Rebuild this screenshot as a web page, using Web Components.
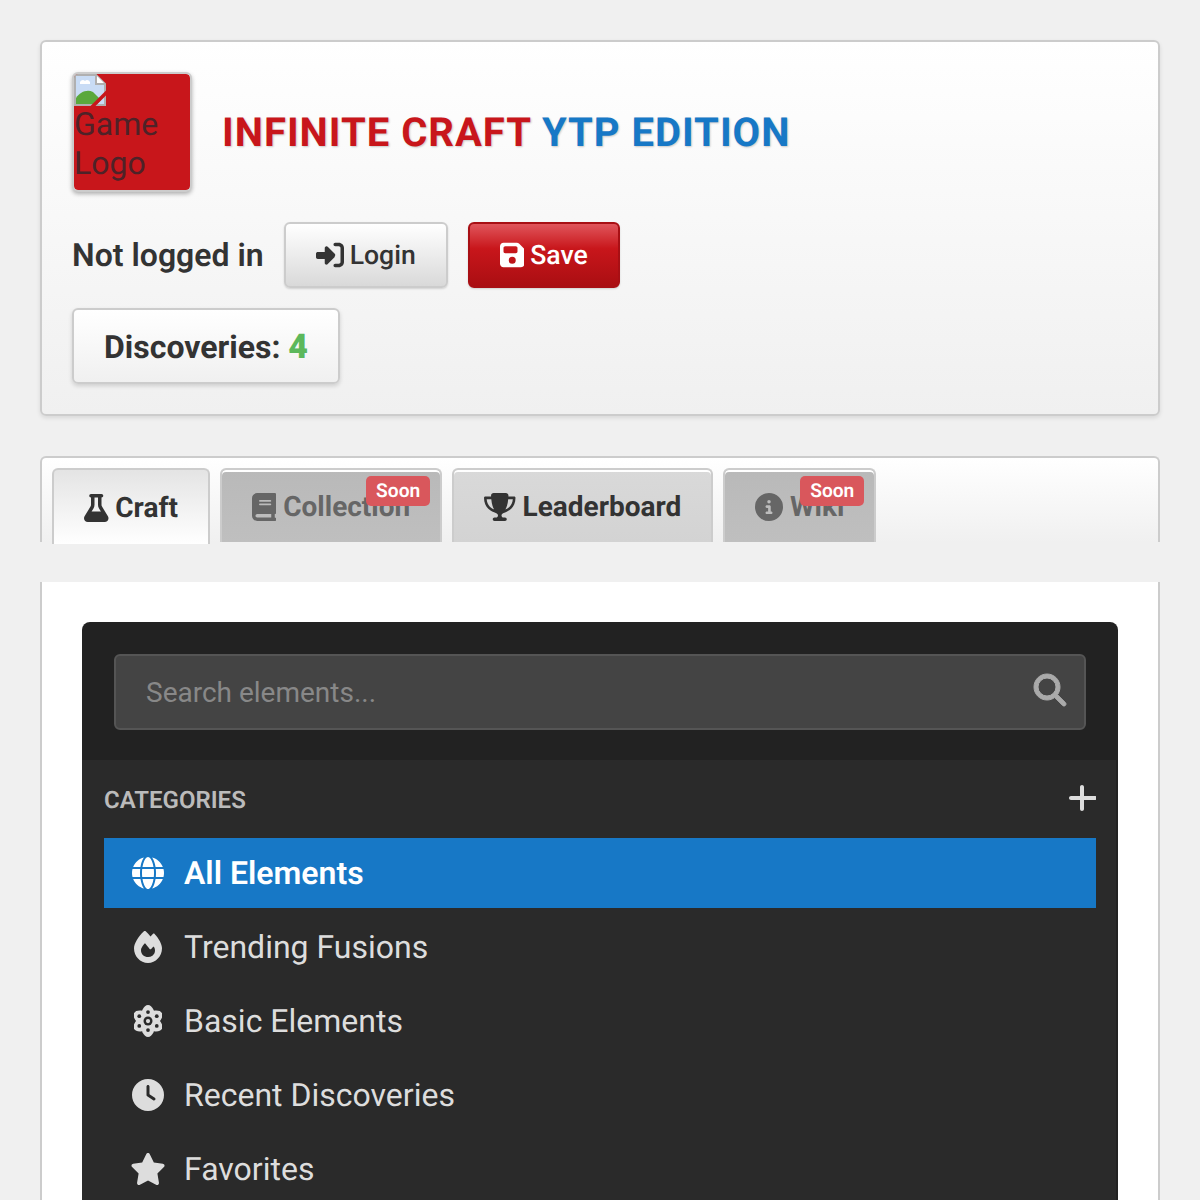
<!DOCTYPE html>
<html lang="en">
<head>
<meta charset="utf-8">
<title>Infinite Craft YTP Edition</title>
<style>
  html { overflow: hidden; }
  body {
    margin: 0;
    padding: 40px;
    height: 1120px;
    overflow: hidden;
    background: #f0f0f0;
    color: #333;
    font-family: Roboto, "Liberation Sans", sans-serif;
    text-rendering: geometricPrecision;
  }
</style>
</head>
<body>
<game-header>
  <broken-logo slot="logo" alt="Game Logo"></broken-logo>
  <span slot="red">INFINITE CRAFT</span>
  <span slot="blue">YTP EDITION</span>
  <span slot="status">Not logged in</span>
  <game-button slot="login" icon="login">Login</game-button>
  <game-button slot="save" icon="save" variant="red">Save</game-button>
  <discovery-count slot="count" count="4"></discovery-count>
</game-header>

<tab-bar>
  <tab-button icon="flask" active>Craft</tab-button>
  <tab-button icon="book" disabled badge="Soon">Collection</tab-button>
  <tab-button icon="trophy">Leaderboard</tab-button>
  <tab-button icon="info" disabled badge="Soon">Wiki</tab-button>
</tab-bar>

<content-card>
  <element-panel>
    <search-box placeholder="Search elements..."></search-box>
    <category-list>
      <category-item icon="globe" active>All Elements</category-item>
      <category-item icon="fire">Trending Fusions</category-item>
      <category-item icon="atom">Basic Elements</category-item>
      <category-item icon="clock">Recent Discoveries</category-item>
      <category-item icon="star">Favorites</category-item>
    </category-list>
  </element-panel>
</content-card>

<script>
const ICONS = {
  login: ["0 0 512 512", `<path d="M352 96l64 0c17.7 0 32 14.3 32 32l0 256c0 17.7-14.3 32-32 32l-64 0c-17.7 0-32 14.3-32 32s14.3 32 32 32l64 0c53 0 96-43 96-96l0-256c0-53-43-96-96-96l-64 0c-17.7 0-32 14.3-32 32s14.3 32 32 32zm-9.4 182.6c12.5-12.5 12.5-32.8 0-45.3l-128-128c-9.2-9.2-22.9-11.9-34.9-6.9s-19.8 16.6-19.8 29.6l0 72-128 0c-17.7 0-32 14.3-32 32l0 64c0 17.7 14.3 32 32 32l128 0 0 72c0 12.9 7.8 24.6 19.8 29.6s25.7 2.2 34.9-6.9l128-128z"/>`],
  save: ["0 0 448 512", `<path d="M64 32C28.7 32 0 60.7 0 96V416c0 35.3 28.7 64 64 64H384c35.3 0 64-28.7 64-64V173.3c0-17-6.7-33.3-18.7-45.3L352 50.7C340 38.7 323.7 32 306.7 32H64zm0 96c0-17.7 14.3-32 32-32H288c17.7 0 32 14.3 32 32v64c0 17.7-14.3 32-32 32H96c-17.7 0-32-14.3-32-32V128zM224 288a64 64 0 1 1 0 128 64 64 0 1 1 0-128z"/>`],
  flask: ["0 0 448 512", `<path d="M288 0H160 128C110.3 0 96 14.3 96 32s14.3 32 32 32V196.8c0 11.8-3.3 23.5-9.5 33.5L10.3 406.2C3.6 417.2 0 429.7 0 442.6C0 480.9 31.1 512 69.4 512H378.6c38.3 0 69.4-31.1 69.4-69.4c0-12.8-3.6-25.4-10.3-36.4L329.5 230.4c-6.2-10.1-9.5-21.7-9.5-33.5V64c17.7 0 32-14.3 32-32s-14.3-32-32-32H288zM192 196.8V64h64V196.8c0 23.7 6.6 46.9 19 67.1L309.5 320h-171L173 263.9c12.4-20.2 19-43.4 19-67.1z"/>`],
  book: ["0 0 448 512", `<path d="M96 0C43 0 0 43 0 96V416c0 53 43 96 96 96H384h32c17.7 0 32-14.3 32-32s-14.3-32-32-32V384c17.7 0 32-14.3 32-32V32c0-17.7-14.3-32-32-32H384 96zm0 384H352v64H96c-17.7 0-32-14.3-32-32s14.3-32 32-32zm32-240c0-8.8 7.2-16 16-16H336c8.8 0 16 7.2 16 16s-7.2 16-16 16H144c-8.8 0-16-7.2-16-16zm16 48H336c8.8 0 16 7.2 16 16s-7.2 16-16 16H144c-8.8 0-16-7.2-16-16s7.2-16 16-16z"/>`],
  trophy: ["0 0 576 512", `<path d="M400 0H176c-26.5 0-48.1 21.8-47.1 48.2c.2 5.3 .4 10.6 .7 15.8H24C10.7 64 0 74.7 0 88c0 92.6 33.5 157 78.5 200.7c44.3 43.1 98.3 64.8 138.1 75.8c23.4 6.5 39.4 26 39.4 45.6c0 20.9-17 37.9-37.9 37.9H192c-17.7 0-32 14.3-32 32s14.3 32 32 32H384c17.7 0 32-14.3 32-32s-14.3-32-32-32H357.9C337 448 320 431 320 410.1c0-19.6 15.9-39.2 39.4-45.6c39.9-11 93.9-32.7 138.2-75.8C542.5 245 576 180.6 576 88c0-13.3-10.7-24-24-24H446.4c.3-5.2 .5-10.4 .7-15.8C448.1 21.8 426.5 0 400 0zM48.9 112h84.4c9.1 90.1 29.2 150.3 51.9 190.6c-24.9-11-50.8-26.5-73.2-48.3c-32-31.1-58-76-63-142.3zM464.1 254.3c-22.4 21.8-48.3 37.3-73.2 48.3c22.7-40.3 42.8-100.5 51.9-190.6h84.4c-5.1 66.3-31.1 111.2-63 142.3z"/>`],
  info: ["0 0 512 512", `<path d="M256 512A256 256 0 1 0 256 0a256 256 0 1 0 0 512zM216 336h24V272H216c-13.3 0-24-10.7-24-24s10.7-24 24-24h48c13.3 0 24 10.7 24 24v88h8c13.3 0 24 10.7 24 24s-10.7 24-24 24H216c-13.3 0-24-10.7-24-24s10.7-24 24-24zm40-208a32 32 0 1 1 0 64 32 32 0 1 1 0-64z"/>`],
  globe: ["0 0 512 512", `<path d="M352 256c0 22.2-1.2 43.6-3.3 64H163.3c-2.2-20.4-3.3-41.8-3.3-64s1.2-43.6 3.3-64H348.7c2.2 20.4 3.3 41.8 3.3 64zm28.8-64H503.9c5.3 20.5 8.1 41.9 8.1 64s-2.8 43.5-8.1 64H380.8c2.1-20.6 3.2-42 3.2-64s-1.1-43.4-3.2-64zm112.6-32H376.7c-10-63.9-29.8-117.4-55.3-151.6c78.3 20.7 142 77.5 171.9 151.6zm-149.1 0H167.7c6.1-36.4 15.5-68.6 27-94.7c10.5-23.6 22.2-40.7 33.5-51.5C239.4 3.2 248.7 0 256 0s16.6 3.2 27.8 13.8c11.3 10.8 23 27.9 33.5 51.5c11.6 26 20.9 58.2 27 94.7zm-209 0H18.6C48.6 85.9 112.2 29.1 190.6 8.4C165.1 42.6 145.3 96.1 135.3 160zM8.1 192H131.2c-2.1 20.6-3.2 42-3.2 64s1.1 43.4 3.2 64H8.1C2.8 299.5 0 278.1 0 256s2.8-43.5 8.1-64zM194.7 446.6c-11.6-26-20.9-58.2-27-94.6H344.3c-6.1 36.4-15.5 68.6-27 94.6c-10.5 23.6-22.2 40.7-33.5 51.5C272.6 508.8 263.3 512 256 512s-16.6-3.2-27.8-13.8c-11.3-10.8-23-27.9-33.5-51.5zM135.3 352c10 63.9 29.8 117.4 55.3 151.6C112.2 482.9 48.6 426.1 18.6 352H135.3zm358.1 0c-30 74.1-93.6 130.9-171.9 151.6c25.5-34.2 45.2-87.7 55.3-151.6H493.4z"/>`],
  fire: ["0 0 448 512", `<path d="M159.3 5.4c7.8-7.3 19.9-7.2 27.7 .1c27.6 25.9 53.5 53.8 77.7 84c11-14.4 23.5-30.1 37-42.9c7.9-7.4 20.1-7.4 28 .1c34.6 33 63.9 76.6 84.5 118c20.3 40.8 33.8 82.5 33.8 111.9C448 404.2 348.2 512 224 512C98.4 512 0 404.1 0 276.5c0-38.4 17.8-85.3 45.4-131.7C73.3 97.7 112.7 48.6 159.3 5.4zM225.7 416c25.3 0 47.7-7 68.8-21c42.1-29.4 53.4-88.2 28.1-134.4c-4.5-9-16-9.6-22.5-2l-25.2 29.3c-6.6 7.6-18.5 7.4-24.7-.5c-16.5-21-46-58.5-62.8-79.8c-6.3-8-18.3-8.1-24.7-.1c-33.8 42.5-50.8 69.3-50.8 99.4C112 375.4 162.6 416 225.7 416z"/>`],
  atom: ["0 0 448 512", `<mask id="atom-holes"><rect width="448" height="512" fill="#000"/><g fill="#fff"><ellipse cx="224" cy="256" rx="125" ry="256"/><ellipse cx="224" cy="256" rx="125" ry="256" transform="rotate(60 224 256)"/><ellipse cx="224" cy="256" rx="125" ry="256" transform="rotate(-60 224 256)"/></g><g fill="#000"><circle cx="224" cy="112" r="30"/><circle cx="224" cy="400" r="30"/><circle cx="84" cy="178" r="30"/><circle cx="364" cy="178" r="30"/><circle cx="84" cy="334" r="30"/><circle cx="364" cy="334" r="30"/><circle cx="224" cy="256" r="72"/></g><circle cx="224" cy="256" r="34" fill="#fff"/></mask><rect width="448" height="512" mask="url(#atom-holes)"/>`],
  clock: ["0 0 512 512", `<path d="M256 0a256 256 0 1 1 0 512A256 256 0 1 1 256 0zM232 120V256c0 8 4 15.5 10.7 20l96 64c11 7.4 25.9 4.4 33.3-6.7s4.4-25.9-6.7-33.3L280 243.2V120c0-13.3-10.7-24-24-24s-24 10.7-24 24z"/>`],
  star: ["0 0 576 512", `<path d="M316.9 18C311.6 7 300.4 0 288.1 0s-23.4 7-28.8 18L195 150.3 51.4 171.5c-12 1.8-22 10.2-25.7 21.7s-.7 24.2 7.9 32.7L137.8 329 113.2 474.7c-2 12 3 24.2 12.9 31.3s23 8 33.8 2.3l128.3-68.5 128.3 68.5c10.8 5.7 23.9 4.9 33.8-2.3s14.9-19.3 12.9-31.3L438.5 329 542.7 225.9c8.6-8.5 11.7-21.2 7.9-32.7s-13.7-19.9-25.7-21.7L381.2 150.3 316.9 18z"/>`],
  search: ["0 0 512 512", `<path d="M416 208c0 45.9-14.9 88.3-40 122.7L502.6 457.4c12.5 12.5 12.5 32.8 0 45.3s-32.8 12.5-45.3 0L330.7 376c-34.4 25.2-76.8 40-122.7 40C93.1 416 0 322.9 0 208S93.1 0 208 0S416 93.1 416 208zM208 352a144 144 0 1 0 0-288 144 144 0 1 0 0 288z"/>`],
  plus: ["0 0 448 512", `<path d="M256 80c0-17.7-14.3-32-32-32s-32 14.3-32 32V224H48c-17.7 0-32 14.3-32 32s14.3 32 32 32H192V432c0 17.7 14.3 32 32 32s32-14.3 32-32V288H432c17.7 0 32-14.3 32-32s-14.3-32-32-32H256V80z"/>`],
};

function iconSvg(name, size) {
  const [box, body] = ICONS[name];
  return `<svg viewBox="${box}" height="${size}" fill="currentColor" aria-hidden="true">${body}</svg>`;
}

class GameHeader extends HTMLElement {
  constructor() {
    super();
    this.attachShadow({ mode: "open" });
    this.shadowRoot.innerHTML = `
    <style>
      :host {
        display: flex;
        flex-direction: column;
        gap: 20px;
        box-sizing: border-box;
        height: 376px;
        padding: 30px;
        margin-bottom: 40px;
        background: linear-gradient(#fff, #f0f0f0);
        border: 2px solid #ccc;
        border-radius: 6px;
        box-shadow: 0 2px 4px rgba(0, 0, 0, 0.1);
      }
      .top { display: flex; align-items: center; gap: 30px; margin-bottom: 10px; }
      h1 {
        margin: 0;
        padding-top: 2px;
        font-size: 40px;
        font-weight: 700;
        line-height: 48px;
        color: #c8161b;
        letter-spacing: 1px;
        text-shadow: 1px 1px 2px rgba(0, 0, 0, 0.2);
      }
      .blue { color: #1778c6; }
      .user { display: flex; align-items: center; gap: 20px; }
      .status { font-size: 32px; font-weight: 600; }
    </style>
    <div class="top">
      <slot name="logo"></slot>
      <h1><slot name="red"></slot> <span class="blue"><slot name="blue"></slot></span></h1>
    </div>
    <div class="user">
      <span class="status"><slot name="status"></slot></span>
      <slot name="login"></slot>
      <slot name="save"></slot>
    </div>
    <div><slot name="count"></slot></div>
    `;
  }
}

class BrokenLogo extends HTMLElement {
  constructor() {
    super();
    this.attachShadow({ mode: "open" });
  }

  connectedCallback() {
    const alt = this.getAttribute("alt") || "";
    this.shadowRoot.innerHTML = `
    <style>
      :host {
        display: block;
        box-sizing: border-box;
        width: 120px;
        height: 120px;
        background: #c8161b;
        background-clip: padding-box;
        border: 2px solid #ccc;
        border-radius: 6px;
        box-shadow: 0 2px 4px rgba(0, 0, 0, 0.3);
        color: #4e2228;
        font-size: 32px;
        line-height: 39px;
        overflow: hidden;
      }
      svg { display: block; margin-bottom: -1px; }
    </style>
    <svg width="32" height="32" viewBox="0 0 32 32" aria-hidden="true">
      <path d="M1 1H22L31 10V31H1Z" fill="#c9dcf5" stroke="#b0b0b0" stroke-width="2"/>
      <path d="M22 1V10H31" fill="#fff" stroke="#b0b0b0" stroke-width="2"/>
      <path d="M6 10a3 3 0 0 1 5-3a3 3 0 0 1 5 3Z" fill="#fff"/>
      <path d="M2 30V24C6 18 13 15 19 18L27 26L23 30Z" fill="#5aa83c"/>
      <path d="M16 35L35 16" stroke="#c8161b" stroke-width="3.5"/>
    </svg>
    <div>${alt}</div>
    `;
  }
}

class GameButton extends HTMLElement {
  constructor() {
    super();
    this.attachShadow({ mode: "open" });
  }

  connectedCallback() {
    const red = this.getAttribute("variant") === "red";
    this.shadowRoot.innerHTML = `
    <style>
      :host {
        display: flex;
        align-items: center;
        gap: 6px;
        box-sizing: border-box;
        height: 66px;
        padding: 0 30px;
        border-radius: 6px;
        font-size: 26.6px;
        font-weight: 500;
        border: 2px solid ${red ? "#a80f14" : "#ccc"};
        color: ${red ? "#fff" : "#333"};
        background: ${red
          ? "linear-gradient(#e0555b 0%, #c8161b 40%, #aa0e12 100%)"
          : "linear-gradient(#fff, #d9d9d9)"};
        box-shadow: 0 1px 2px rgba(0, 0, 0, 0.15);
      }
    </style>
    ${iconSvg(this.getAttribute("icon"), 28)}
    <slot></slot>
    `;
  }
}

class DiscoveryCount extends HTMLElement {
  constructor() {
    super();
    this.attachShadow({ mode: "open" });
  }

  connectedCallback() {
    this.shadowRoot.innerHTML = `
    <style>
      :host {
        display: inline-block;
        box-sizing: border-box;
        height: 76px;
        padding: 0 30px;
        line-height: 74px;
        font-size: 32px;
        font-weight: 700;
        border: 2px solid #ccc;
        border-radius: 6px;
        background: linear-gradient(#fff, #f0f0f0);
        box-shadow: 0 2px 4px rgba(0, 0, 0, 0.15);
      }
      b { color: #5cb85c; font-size: 34px; }
    </style>
    Discoveries: <b>${this.getAttribute("count")}</b>
    `;
  }
}

class TabBar extends HTMLElement {
  constructor() {
    super();
    this.attachShadow({ mode: "open" });
    this.shadowRoot.innerHTML = `
    <style>
      :host {
        display: flex;
        gap: 10px;
        box-sizing: border-box;
        height: 86px;
        padding: 10px 10px 0;
        margin-bottom: 40px;
        background: linear-gradient(#fff, #f0f0f0);
        border: 2px solid #ccc;
        border-bottom: 0;
        border-radius: 6px 6px 0 0;
      }
    </style>
    <slot></slot>
    `;
  }
}

class TabButton extends HTMLElement {
  constructor() {
    super();
    this.attachShadow({ mode: "open" });
  }

  connectedCallback() {
    const active = this.hasAttribute("active");
    const disabled = this.hasAttribute("disabled");
    const badge = this.getAttribute("badge");
    let bg = "linear-gradient(#d9d9d9, #d3d3d3)";
    if (active) bg = "linear-gradient(#e4e4e4, #fff)";
    if (disabled) bg = "linear-gradient(#b9b9b9, #bfbfbf)";
    this.shadowRoot.innerHTML = `
    <style>
      :host {
        position: relative;
        display: flex;
        align-items: center;
        gap: 6.8px;
        box-sizing: border-box;
        height: ${active ? 76 : 74}px;
        padding: 1px 30px 0;
        font-size: 28px;
        font-weight: 700;
        color: ${disabled ? "#666" : "#333"};
        background: ${bg};
        border: 2px solid #ccc;
        border-bottom: 0;
        border-radius: 6px 6px 0 0;
        ${active ? "" : "box-shadow: inset 0 2px 0 #fff;"}
      }
      svg { flex: none; }
      .badge {
        position: absolute;
        top: 6px;
        right: 10px;
        padding: 0 10px;
        height: 30px;
        line-height: 30px;
        border-radius: 5px;
        background: #d9575c;
        color: #fff;
        font-size: 19.2px;
        font-weight: 600;
      }
    </style>
    ${iconSvg(this.getAttribute("icon"), 28)}
    <slot></slot>
    ${badge ? `<span class="badge">${badge}</span>` : ""}
    `;
  }
}

class ContentCard extends HTMLElement {
  constructor() {
    super();
    this.attachShadow({ mode: "open" });
    this.shadowRoot.innerHTML = `
    <style>
      :host {
        display: block;
        box-sizing: border-box;
        padding: 40px;
        min-height: 700px;
        background: #fff;
        border: 2px solid #ccc;
        border-top: 0;
        border-bottom: 0;
      }
    </style>
    <slot></slot>
    `;
  }
}

class ElementPanel extends HTMLElement {
  constructor() {
    super();
    this.attachShadow({ mode: "open" });
    this.shadowRoot.innerHTML = `
    <style>
      :host {
        display: block;
        background: #222;
        border-radius: 8px 8px 0 0;
        overflow: hidden;
      }
    </style>
    <slot></slot>
    `;
  }
}

class SearchBox extends HTMLElement {
  constructor() {
    super();
    this.attachShadow({ mode: "open" });
  }

  connectedCallback() {
    this.shadowRoot.innerHTML = `
    <style>
      :host {
        display: block;
        position: relative;
        padding: 32px 32px 30px;
      }
      input {
        display: block;
        box-sizing: border-box;
        width: 100%;
        height: 76px;
        padding: 0 30px;
        font: 400 28px Roboto, "Liberation Sans", sans-serif;
        color: #eee;
        background: #444;
        border: 2px solid #555;
        border-radius: 6px;
        outline: 0;
      }
      input::placeholder { color: #888; opacity: 1; }
      svg {
        position: absolute;
        top: 52px;
        right: 52px;
        color: #aaa;
        overflow: visible;
        stroke: currentColor;
        stroke-width: 16;
      }
    </style>
    <input type="text" placeholder="${this.getAttribute("placeholder")}">
    ${iconSvg("search", 32)}
    `;
  }
}

class CategoryList extends HTMLElement {
  constructor() {
    super();
    this.attachShadow({ mode: "open" });
    this.shadowRoot.innerHTML = `
    <style>
      :host {
        display: block;
        box-sizing: border-box;
        margin-right: 2px;
        padding: 20px 20px 0 22px;
        background: #2a2a2a;
        height: 500px;
      }
      .head {
        display: flex;
        align-items: center;
        justify-content: space-between;
        height: 38px;
        margin-bottom: 20px;
        color: #bbb;
        font-size: 24px;
        font-weight: 600;
        text-transform: uppercase;
      }
      .head span { padding-top: 2px; }
      .head svg { display: block; color: #ddd; margin: -2px 0 0 0; }
      .list { display: flex; flex-direction: column; gap: 4px; }
    </style>
    <div class="head">
      <span>Categories</span>
      ${iconSvg("plus", 32)}
    </div>
    <div class="list"><slot></slot></div>
    `;
  }
}

class CategoryItem extends HTMLElement {
  constructor() {
    super();
    this.attachShadow({ mode: "open" });
  }

  connectedCallback() {
    const active = this.hasAttribute("active");
    this.shadowRoot.innerHTML = `
    <style>
      :host {
        display: flex;
        align-items: center;
        gap: 20px;
        box-sizing: border-box;
        height: 70px;
        padding: 0 28px;
        font-size: 32px;
        font-weight: ${active ? 600 : 400};
        color: ${active ? "#fff" : "#ddd"};
        background: ${active ? "#1778c6" : "transparent"};
      }
      .icon { flex: none; width: 32px; display: flex; justify-content: center; }
      svg { display: block; flex: none; }
    </style>
    <span class="icon">${iconSvg(this.getAttribute("icon"), 32)}</span>
    <slot></slot>
    `;
  }
}

window.customElements.define("game-header", GameHeader);
window.customElements.define("broken-logo", BrokenLogo);
window.customElements.define("game-button", GameButton);
window.customElements.define("discovery-count", DiscoveryCount);
window.customElements.define("tab-bar", TabBar);
window.customElements.define("tab-button", TabButton);
window.customElements.define("content-card", ContentCard);
window.customElements.define("element-panel", ElementPanel);
window.customElements.define("search-box", SearchBox);
window.customElements.define("category-list", CategoryList);
window.customElements.define("category-item", CategoryItem);
</script>
</body>
</html>
